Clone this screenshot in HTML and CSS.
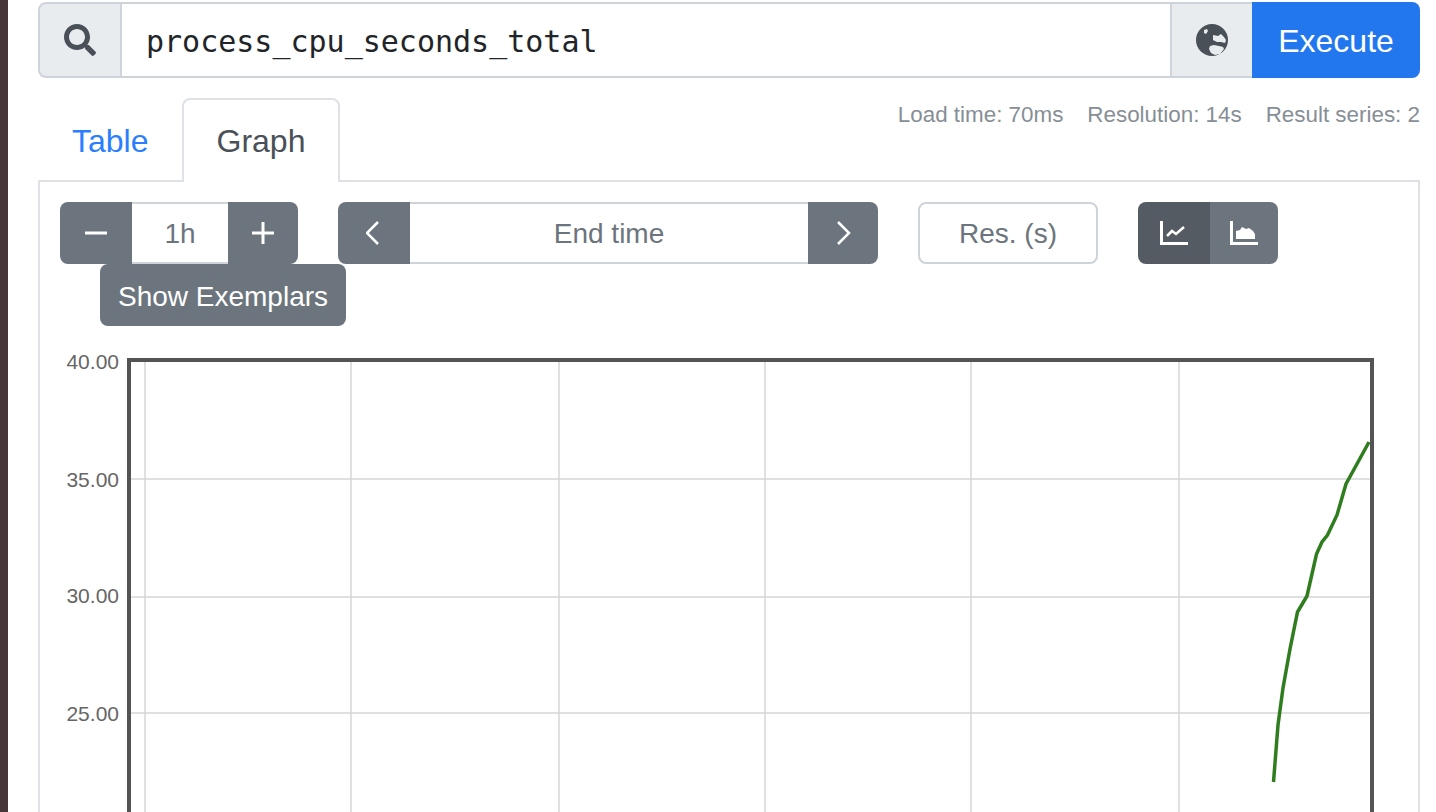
FILE: index.html
```html
<!DOCTYPE html>
<html lang="en">
<head>
  <meta charset="UTF-8">
  <meta name="viewport" content="width=device-width, initial-scale=1.0">
  <title>Prometheus Time Series Collection and Processing Server</title>
  <link rel="stylesheet" href="styles.css">
</head>
<body>
  <div class="edge"></div>
  <div class="container">
    <!-- Expression input -->
    <div class="input-group">
      <div class="addon addon-left">
        <svg class="icon-search" viewBox="0 0 512 512"><path d="M505 442.7L405.3 343c-4.5-4.5-10.6-7-17-7H372c27.6-35.3 44-79.7 44-128C416 93.1 322.9 0 208 0S0 93.1 0 208s93.1 208 208 208c48.3 0 92.7-16.4 128-44v16.3c0 6.4 2.5 12.5 7 17l99.7 99.7c9.4 9.4 24.6 9.4 33.9 0l28.3-28.3c9.4-9.4 9.4-24.6.1-34zM208 336c-70.7 0-128-57.2-128-128 0-70.7 57.2-128 128-128 70.7 0 128 57.2 128 128 0 70.7-57.2 128-128 128z"/></svg>
      </div>
      <div class="expr">process_cpu_seconds_total</div>
      <div class="addon addon-right">
        <svg class="icon-globe" viewBox="0 0 32 32">
          <circle cx="16" cy="16" r="16" fill="#495057"/>
          <path fill="#e9ecef" d="M8 6l3-1 1 2-2 3-2-1zM17 11l5 1 3-2 3 3 2 3-1 3-4-1-4 0-4-2zM14 22l4-1 5 1 4 1 1 2-4 5-5 1-4-2-2-4z"/>
        </svg>
      </div>
      <button class="btn-execute">Execute</button>
    </div>

    <!-- Tabs and query stats -->
    <div class="tabs-row">
      <a class="tab">Table</a>
      <a class="tab active">Graph</a>
      <div class="stats">
        <span>Load time: 70ms</span>
        <span>Resolution: 14s</span>
        <span>Result series: 2</span>
      </div>
    </div>

    <div class="pane">
      <div class="controls">
        <div class="group">
          <button class="btn btn-range">
            <svg class="icon-op" viewBox="0 0 24 24"><path d="M1 12h22"/></svg>
          </button>
          <div class="field field-range">1h</div>
          <button class="btn btn-plus">
            <svg class="icon-op" viewBox="0 0 24 24"><path d="M1 12h22M12 1v22"/></svg>
          </button>
        </div>
        <div class="group">
          <button class="btn btn-range">
            <svg class="icon-chev" viewBox="0 0 16 28"><path d="M12 3L1 14l11 11"/></svg>
          </button>
          <div class="field field-time">End time</div>
          <button class="btn btn-plus">
            <svg class="icon-chev" viewBox="0 0 16 28"><path d="M3 3l11 11L3 25"/></svg>
          </button>
        </div>
        <div class="field-res">Res. (s)</div>
        <div class="group">
          <button class="btn btn-range btn-dark">
            <svg class="icon-chart" viewBox="0 0 28 26">
              <path class="axis" d="M1.5 1v22.5H28"/>
              <path class="axis trend" d="M7 16l5-5 4 3 8-7"/>
            </svg>
          </button>
          <button class="btn btn-stack">
            <svg class="icon-chart" viewBox="0 0 28 26">
              <path class="axis" d="M1.5 1v22.5H28"/>
              <path class="fill" d="M6 19v-8l4-1 2-3 4 2 3-1 4 3 2 3v5z"/>
            </svg>
          </button>
        </div>
      </div>
      <button class="btn-exemplars">Show Exemplars</button>

      <!-- Graph -->
      <svg class="graph" viewBox="0 0 1380 500">
        <g class="ticks">
          <text x="79" y="31">40.00</text>
          <text x="79" y="149">35.00</text>
          <text x="79" y="265">30.00</text>
          <text x="79" y="383">25.00</text>
        </g>
        <g class="grid">
          <path d="M105 22V500M311 22V500M519 22V500M725 22V500M931 22V500M1139 22V500"/>
          <path d="M87 141H1333M87 259H1333M87 375H1333"/>
        </g>
        <path class="series" d="M1233.5 444L1238 387 1243 350 1250 311 1257.5 274 1267 258 1276.5 216 1282 204 1287.5 197 1297 177 1306 146 1329 104"/>
        <path class="frame" d="M89 500V22H1332V500"/>
      </svg>
    </div>
  </div>
</body>
</html>
```

FILE: styles.css
```css
/* Base Styling */
html, body {
  height: 812px;
  overflow: hidden;
}

body {
  margin: 0;
  display: flex;
  font-family: "Liberation Sans", Arial, sans-serif;
  font-size: 32px;
  background: #fff;
  color: #495057;
}

button {
  font-family: inherit;
  font-size: inherit;
  border: none;
  padding: 0;
  cursor: pointer;
}

.edge {
  flex: none;
  width: 8px;
  background: #46363a;
}

.container {
  flex: 1;
  padding: 2px 16px 0 30px;
  min-width: 0;
}

/* Expression input */
.input-group {
  display: flex;
  height: 76px;
}

.addon {
  display: flex;
  align-items: center;
  justify-content: center;
  background: #e9ecef;
  border: 2px solid #ced4da;
  box-sizing: border-box;
}

.addon-left {
  width: 84px;
  border-radius: 8px 0 0 8px;
}

.addon-right {
  width: 82px;
  border-right: none;
}

.icon-search {
  width: 32px;
  height: 32px;
  fill: #495057;
}

.icon-globe {
  width: 32px;
  height: 32px;
}

.expr {
  flex: 1;
  display: flex;
  align-items: center;
  padding: 2px 0 0 24px;
  border: solid #ced4da;
  border-width: 2px 0;
  font-family: "DejaVu Sans Mono", monospace;
  font-size: 30px;
  color: #212529;
}

.btn-execute {
  width: 168px;
  padding-top: 2px;
  background: #2277ee;
  color: #fff;
  border-radius: 0 8px 8px 0;
}

/* Tabs */
.tabs-row {
  display: flex;
  height: 104px;
  align-items: flex-end;
  margin-bottom: -2px;
  position: relative;
}

.tab {
  box-sizing: border-box;
  height: 84px;
  padding: 21px 32px 0;
  color: #2a7fff;
  line-height: 40px;
  border: 2px solid transparent;
  border-bottom: none;
}

.tab.active {
  margin-left: -1px;
  padding: 21px 33px 0;
  color: #495057;
  background: #fff;
  border-color: #dee2e6;
  border-radius: 8px 8px 0 0;
  position: relative;
  z-index: 1;
}

.stats {
  margin-left: auto;
  align-self: flex-start;
  display: flex;
  gap: 24px;
  padding-top: 24px;
  font-size: 22.4px;
  line-height: 26px;
  color: #868e96;
}

/* Graph pane */
.pane {
  border: 2px solid #dee2e6;
  border-bottom: none;
  height: 640px;
  padding: 20px 20px 0;
}

.controls {
  display: flex;
  gap: 40px;
  height: 62px;
  line-height: 60px;
  color: #6c757d;
  font-size: 28px;
}

.group {
  display: flex;
}

.btn {
  display: flex;
  align-items: center;
  justify-content: center;
  background: #6c757d;
}

.btn-range {
  width: 72px;
  border-radius: 8px 0 0 8px;
}

.btn-plus {
  width: 70px;
  border-radius: 0 8px 8px 0;
}

.btn-stack {
  width: 68px;
  border-radius: 0 8px 8px 0;
}

.btn-dark {
  background: #545b62;
}

.field {
  box-sizing: border-box;
  text-align: center;
  border: solid #ced4da;
  border-width: 2px 0;
}

.field-range {
  width: 96px;
}

.field-time {
  width: 398px;
}

.field-res {
  box-sizing: border-box;
  width: 180px;
  text-align: center;
  border: 2px solid #ced4da;
  border-radius: 8px;
}

.icon-op {
  width: 24px;
  height: 24px;
  fill: none;
  stroke: #fff;
  stroke-width: 3;
}

.icon-chev {
  width: 16px;
  height: 28px;
  fill: none;
  stroke: #fff;
  stroke-width: 2.5;
}

.icon-chart {
  width: 28px;
  height: 26px;
}

.icon-chart .axis {
  fill: none;
  stroke: #fff;
  stroke-width: 3;
}

.icon-chart .trend {
  stroke-width: 2.5;
}

.icon-chart .fill {
  fill: #fff;
}

.btn-exemplars {
  display: block;
  width: 246px;
  height: 62px;
  margin-left: 40px;
  padding-top: 4px;
  background: #6c757d;
  color: #fff;
  font-size: 28px;
  border-radius: 8px;
}

.graph {
  display: block;
  width: 1380px;
  height: 500px;
  margin-top: 12px;
  margin-left: -20px;
}

.ticks text {
  font-family: "Liberation Sans", Arial, sans-serif;
  font-size: 21px;
  fill: #666;
  text-anchor: end;
}

.grid path {
  fill: none;
  stroke: #d6d6d6;
  stroke-width: 1.5;
}

.frame {
  fill: none;
  stroke: #545454;
  stroke-width: 4;
}

.series {
  fill: none;
  stroke: #2f7d1f;
  stroke-width: 3.5;
}
```
